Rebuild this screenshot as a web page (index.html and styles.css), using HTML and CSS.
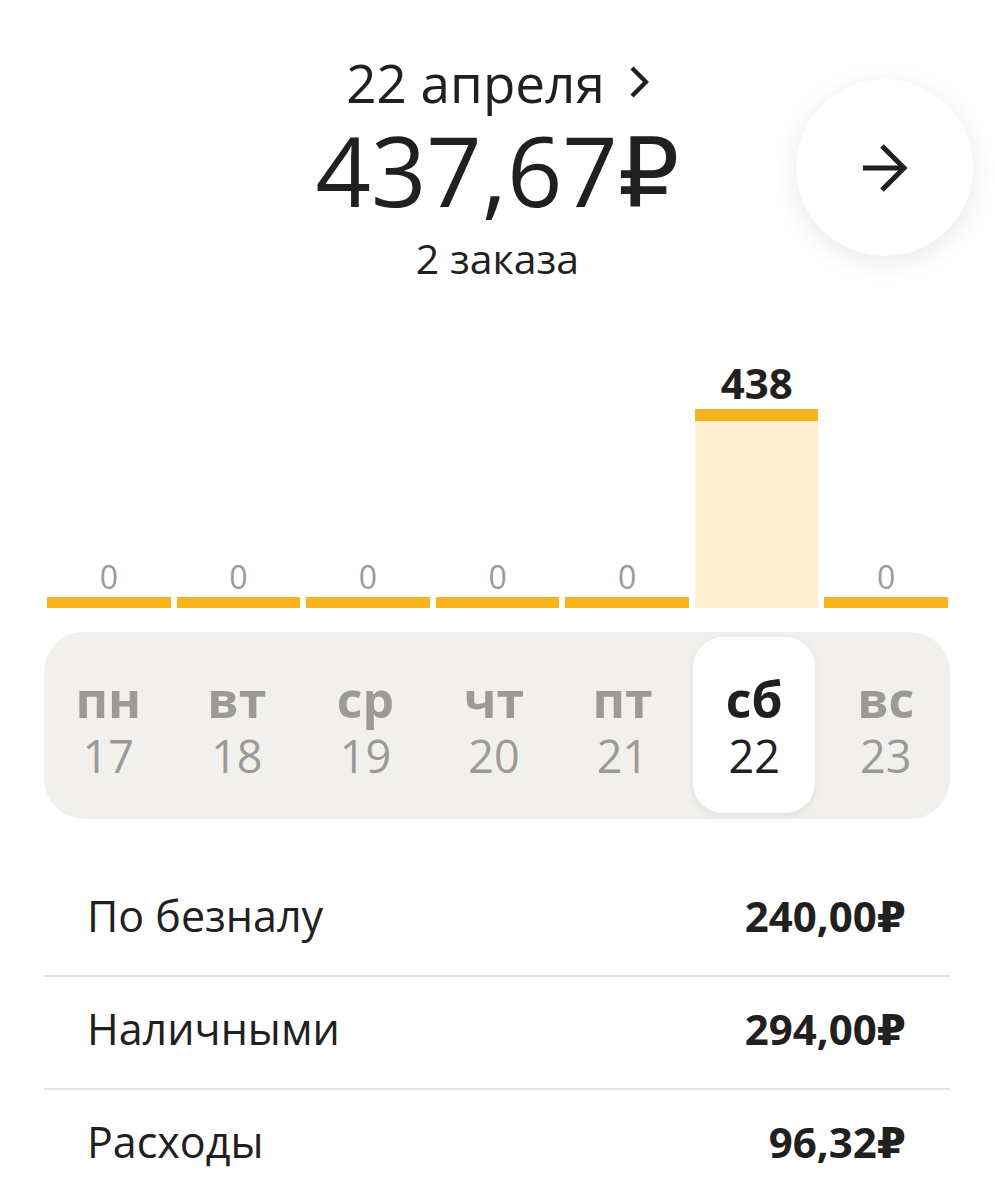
FILE: index.html
```html
<!DOCTYPE html>
<html>

<head>
  <title>Заработок за неделю</title>
  <link rel="stylesheet" href="styles.css">
</head>

<body>
  <div class="header">
    <div class="summary">
      <div class="date">
        <span>22 апреля</span>
        <svg class="chevron" width="20" height="32" viewBox="0 0 20 32">
          <polyline points="3,2 17,16 3,30" fill="none" stroke="#21201f" stroke-width="4.4" />
        </svg>
      </div>
      <div class="total">437,67₽</div>
      <div class="orders">2 заказа</div>
    </div>
    <button class="next-button">
      <svg width="48" height="48" viewBox="0 0 48 48">
        <line x1="2" y1="24" x2="43" y2="24" stroke="#21201f" stroke-width="5" />
        <polyline points="21,2 43,24 21,46" fill="none" stroke="#21201f" stroke-width="5" />
      </svg>
    </button>
  </div>

  <div class="chart">
    <div class="column"><div class="value">0</div><div class="bar"></div></div>
    <div class="column"><div class="value">0</div><div class="bar"></div></div>
    <div class="column"><div class="value">0</div><div class="bar"></div></div>
    <div class="column"><div class="value">0</div><div class="bar"></div></div>
    <div class="column"><div class="value">0</div><div class="bar"></div></div>
    <div class="column active"><div class="value">438</div><div class="bar" style="height: 199px"></div></div>
    <div class="column"><div class="value">0</div><div class="bar"></div></div>
  </div>

  <div class="days">
    <div class="day"><div class="day-name">пн</div><div class="day-num">17</div></div>
    <div class="day"><div class="day-name">вт</div><div class="day-num">18</div></div>
    <div class="day"><div class="day-name">ср</div><div class="day-num">19</div></div>
    <div class="day"><div class="day-name">чт</div><div class="day-num">20</div></div>
    <div class="day"><div class="day-name">пт</div><div class="day-num">21</div></div>
    <div class="day selected"><div class="day-name">сб</div><div class="day-num">22</div></div>
    <div class="day"><div class="day-name">вс</div><div class="day-num">23</div></div>
  </div>

  <div class="details">
    <div class="row"><span>По безналу</span><span class="amount">240,00₽</span></div>
    <div class="row"><span>Наличными</span><span class="amount">294,00₽</span></div>
    <div class="row"><span>Расходы</span><span class="amount">96,32₽</span></div>
  </div>
</body>

</html>
```
FILE: styles.css
```css
body {
  font-family: "Open Sans", "DejaVu Sans", sans-serif;
  background-color: white;
  color: #21201f;
  margin: 0;
  width: 995px;
}

.header {
  display: grid;
  grid-template-columns: 1fr auto 1fr;
  padding-top: 53px;
}

.summary {
  grid-column: 2;
  display: flex;
  flex-direction: column;
  align-items: center;
}

.date {
  display: flex;
  align-items: center;
  font-size: 53px;
  line-height: 60px;
}

.chevron {
  margin-left: 24px;
  margin-top: -3px;
}

.total {
  font-size: 97px;
  line-height: 100px;
  margin-top: 6px;
}

.orders {
  font-size: 41px;
  line-height: 44px;
  margin-top: 17px;
}

.next-button {
  grid-column: 3;
  justify-self: end;
  align-self: start;
  width: 177px;
  height: 177px;
  margin-top: 26px;
  margin-right: 22px;
  border: none;
  border-radius: 50%;
  background-color: white;
  box-shadow: 0 6px 28px rgba(0, 0, 0, 0.09);
  display: flex;
  align-items: center;
  justify-content: center;
  padding: 0;
}

.chart {
  display: flex;
  align-items: flex-end;
  gap: 6px;
  height: 260px;
  margin-top: 68px;
  padding: 0 47px;
}

.column {
  flex: 1;
  display: flex;
  flex-direction: column;
  align-items: center;
}

.value {
  font-size: 32px;
  line-height: 36px;
  color: #9c9a99;
  margin-bottom: 2px;
}

.bar {
  align-self: stretch;
  height: 0;
  border-top: 11px solid #f6b51e;
}

.active .value {
  font-size: 42px;
  line-height: 46px;
  font-weight: 700;
  color: #21201f;
  margin-bottom: 3px;
}

.active .bar {
  box-sizing: border-box;
  border-top-width: 12px;
  background-color: #fff0d3;
}

.days {
  display: flex;
  gap: 6px;
  margin: 24px 45px 0 44px;
  padding: 5px 3px 6px;
  background-color: #f1f0ed;
  border-radius: 40px;
}

.day {
  flex: 1;
  height: 176px;
  box-sizing: border-box;
  padding-top: 34px;
  display: flex;
  flex-direction: column;
  align-items: center;
  color: #9c9a99;
}

.day-name {
  font-size: 50px;
  line-height: 56px;
  font-weight: 700;
}

.day-num {
  font-size: 45px;
  line-height: 50px;
  margin-top: 4px;
}

.selected {
  margin: 0 3px;
  background-color: white;
  border-radius: 30px;
  box-shadow: 0 3px 10px rgba(0, 0, 0, 0.07);
  color: #21201f;
}

.details {
  margin: 45px 45px 0 44px;
}

.row {
  display: flex;
  justify-content: space-between;
  padding: 27px 44px 34px 43px;
  font-size: 43px;
  line-height: 50px;
  border-bottom: 2px solid #e3e2e0;
}

.row:last-child {
  border-bottom: none;
}

.amount {
  font-size: 42px;
  font-weight: 700;
}
```
